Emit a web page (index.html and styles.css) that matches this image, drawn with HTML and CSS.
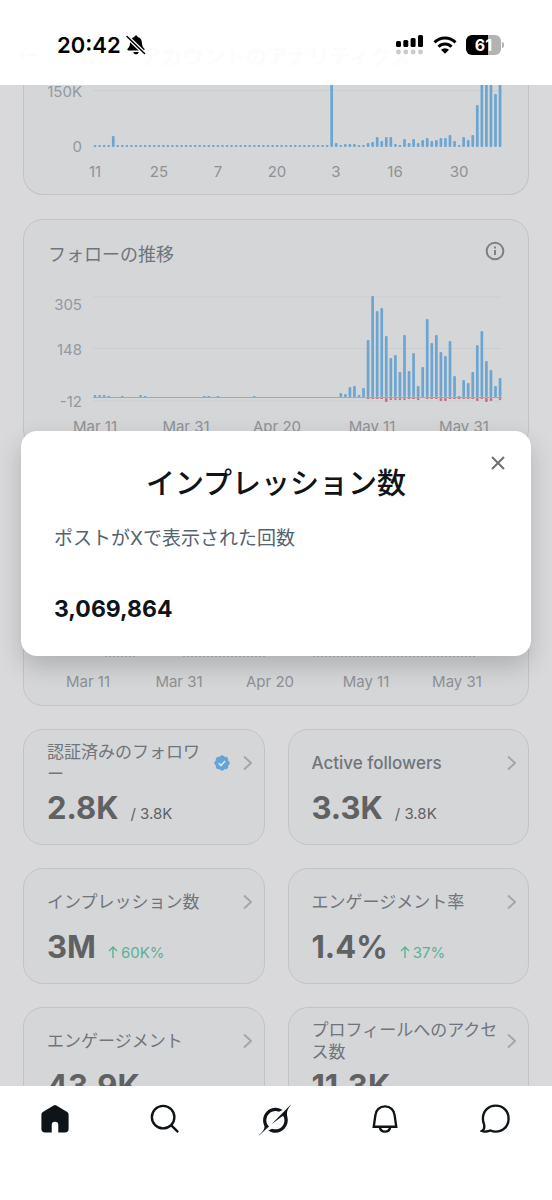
FILE: index.html
```html
<!DOCTYPE html>
<html lang="ja">
<head>
<meta charset="utf-8">
<meta name="viewport" content="width=device-width, initial-scale=1">
<title>アカウントのアナリティクス</title>
<link rel="stylesheet" href="styles.css">
</head>
<body>
<div class="app">
  <header class="topbar">
    <div class="status">
      <div class="status-left">
        <span class="clock">20:42</span>
        <svg class="bell-off" viewBox="0 0 20 20" aria-hidden="true">
          <path d="M10 .6c-.9 0-1.5.6-1.6 1.3C5.600 2.600 4.200 4.800 4.100 7.600c-.1 3.300-.9 4.500-2.300 6-.8.9-.4 2 .9 2h14.600c1.300 0 1.700-1.100.9-2-1.400-1.500-2.200-2.700-2.300-6-.1-2.800-1.500-5-4.300-5.700C11.500 1.200 10.900.6 10 .6z"/>
          <path d="M7.300 17h5.400c-.2 1.500-1.300 2.300-2.700 2.300S7.500 18.500 7.300 17z"/>
          <path d="M1 1.500 18.500 18.500" stroke="#fff" stroke-width="4"/>
          <path d="M1 1.500 18.500 18.500" stroke="#000" stroke-width="1.500" stroke-linecap="round"/>
        </svg>
      </div>
      <div class="status-right">
        <svg class="signal" viewBox="0 0 28 20" aria-hidden="true">
          <rect x="0" y="6" width="5" height="6" rx="1.500"/><rect x="7.300" y="5" width="5" height="7" rx="1.500"/><rect x="14.600" y="3" width="5" height="9" rx="1.500"/><rect x="22" y="0" width="5" height="12" rx="1.500"/>
          <g fill="#c9c9c9"><circle cx="2.500" cy="17" r="2.400"/><circle cx="9.800" cy="17" r="2.400"/><circle cx="17.100" cy="17" r="2.400"/><circle cx="24.500" cy="17" r="2.400"/></g>
        </svg>
        <svg class="wifi" viewBox="0 0 24 18" aria-hidden="true">
          <path d="M1.500 6.400a15 15 0 0 1 21 0M5.500 10.700a9.200 9.200 0 0 1 13 0" fill="none" stroke="#000" stroke-width="3"/>
          <path d="M12 17.800 8 13.800a5.700 5.700 0 0 1 8 0z"/>
        </svg>
        <span class="battery"><span class="battery-level">61</span></span>
      </div>
    </div>
    <div class="page-title">
      <svg class="back" viewBox="0 0 20 18" aria-hidden="true"><path d="M9 2 2 9l7 7M2 9h17"/></svg>
      <span>アカウントのアナリティクス</span>
    </div>
  </header>

  <main class="content">
    <section class="card card-cut">
      <svg class="chart" viewBox="-1 0 504 109" role="img" aria-label="日別の推移">
        <path class="grid" d="M68 5.500H477"/>
        <g class="bars" data-series="daily" data-base="62"></g>
        <g class="y-label"><text x="57" y="12">150K</text><text x="57" y="67">0</text></g>
        <g class="x-label"><text x="70" y="92">11</text><text x="134" y="92">25</text><text x="193" y="92">7</text><text x="252" y="92">20</text><text x="311" y="92">3</text><text x="370" y="92">16</text><text x="434" y="92">30</text></g>
      </svg>
    </section>

    <section class="card">
      <div class="card-head">
        <h2>フォローの推移</h2>
        <button class="info" type="button" aria-label="詳細">
          <svg viewBox="0 0 22 22" aria-hidden="true"><circle cx="11" cy="11" r="8.300"/><path d="M11 10v5M11 6.600v2"/></svg>
        </button>
      </div>
      <svg class="chart" viewBox="-1 0 504 179" role="img" aria-label="フォローの推移">
        <path class="grid" d="M68 27H477M68 78.500H477M68 131H477"/>
        <g class="bars" data-series="follows" data-base="127"></g>
        <g class="losses" data-series="unfollows" data-base="128"></g>
        <path class="zero" d="M68 127.500H477"/>
        <g class="y-label"><text x="57" y="40">305</text><text x="57" y="85">148</text><text x="57" y="137">-12</text></g>
        <g class="x-label"><text x="70" y="162">Mar 11</text><text x="161" y="162">Mar 31</text><text x="252" y="162">Apr 20</text><text x="347" y="162">May 11</text><text x="439" y="162">May 31</text></g>
      </svg>
    </section>

    <section class="card">
      <svg class="chart" viewBox="-1 0 504 230" role="img" aria-label="投稿の推移">
        <path class="floor" d="M80 181.500H112M158 181.500H240M288 181.500H450"/>
        <g class="x-label"><text x="63" y="212">Mar 11</text><text x="154" y="212">Mar 31</text><text x="245" y="212">Apr 20</text><text x="341" y="212">May 11</text><text x="432" y="212">May 31</text></g>
      </svg>
    </section>

    <div class="stats">
      <a class="card stat" href="#verified">
        <span class="stat-head"><span class="stat-label">認証済みのフォロワー</span>
          <svg class="verified" viewBox="0 0 22 22" aria-hidden="true"><path d="M20.396 11c-.018-.646-.215-1.275-.57-1.816-.354-.54-.852-.972-1.438-1.246.223-.607.270-1.264.140-1.897-.131-.634-.437-1.218-.882-1.687-.470-.445-1.053-.750-1.687-.882-.633-.130-1.290-.083-1.897.140-.273-.587-.704-1.086-1.245-1.440S11.647 1.620 11 1.604c-.646.017-1.273.213-1.813.568s-.969.854-1.240 1.440c-.608-.223-1.267-.272-1.902-.140-.635.130-1.220.436-1.690.882-.445.470-.749 1.055-.878 1.688-.130.633-.080 1.290.144 1.896-.587.274-1.087.705-1.443 1.245-.356.540-.555 1.170-.574 1.817.020.647.218 1.276.574 1.817.356.540.856.972 1.443 1.245-.224.606-.274 1.263-.144 1.896.130.634.433 1.218.877 1.688.470.443 1.054.747 1.687.878.633.132 1.290.084 1.897-.136.274.586.705 1.084 1.246 1.439.540.354 1.170.551 1.816.569.647-.016 1.276-.213 1.817-.567s.972-.854 1.245-1.440c.604.239 1.266.296 1.903.164.636-.132 1.220-.447 1.680-.907.460-.460.776-1.044.908-1.681s.075-1.299-.165-1.903c.586-.274 1.084-.705 1.439-1.246.354-.540.551-1.170.569-1.816z"/><path class="tick" d="m7 11.300 2.800 2.700 5-5.500"/></svg>
          <svg class="chevron" viewBox="0 0 9 16" aria-hidden="true"><path d="m1 1.500 7 6.500-7 6.500"/></svg></span>
        <span class="stat-row"><strong>2.8K</strong><span class="total">/ 3.8K</span></span>
      </a>
      <a class="card stat" href="#active">
        <span class="stat-head"><span class="stat-label" lang="en">Active followers</span>
          <svg class="chevron" viewBox="0 0 9 16" aria-hidden="true"><path d="m1 1.500 7 6.500-7 6.500"/></svg></span>
        <span class="stat-row"><strong>3.3K</strong><span class="total">/ 3.8K</span></span>
      </a>
      <a class="card stat" href="#impressions">
        <span class="stat-head"><span class="stat-label">インプレッション数</span>
          <svg class="chevron" viewBox="0 0 9 16" aria-hidden="true"><path d="m1 1.500 7 6.500-7 6.500"/></svg></span>
        <span class="stat-row"><strong>3M</strong><span class="change"><svg viewBox="0 0 10 12" aria-hidden="true"><path d="M5 12V1M1 5l4-4 4 4"/></svg>60K%</span></span>
      </a>
      <a class="card stat" href="#rate">
        <span class="stat-head"><span class="stat-label">エンゲージメント率</span>
          <svg class="chevron" viewBox="0 0 9 16" aria-hidden="true"><path d="m1 1.500 7 6.500-7 6.500"/></svg></span>
        <span class="stat-row"><strong>1.4%</strong><span class="change"><svg viewBox="0 0 10 12" aria-hidden="true"><path d="M5 12V1M1 5l4-4 4 4"/></svg>37%</span></span>
      </a>
      <a class="card stat" href="#engagement">
        <span class="stat-head"><span class="stat-label">エンゲージメント</span>
          <svg class="chevron" viewBox="0 0 9 16" aria-hidden="true"><path d="m1 1.500 7 6.500-7 6.500"/></svg></span>
        <span class="stat-row"><strong>43.9K</strong></span>
      </a>
      <a class="card stat" href="#visits">
        <span class="stat-head"><span class="stat-label">プロフィールへのアクセス数</span>
          <svg class="chevron" viewBox="0 0 9 16" aria-hidden="true"><path d="m1 1.500 7 6.500-7 6.500"/></svg></span>
        <span class="stat-row"><strong>11.3K</strong></span>
      </a>
    </div>
  </main>

  <nav class="tabs">
    <a href="#home" aria-label="ホーム"><svg viewBox="0 0 32 32" aria-hidden="true"><path class="solid" d="M14.500 1.600a2.600 2.600 0 0 1 3 0l11.500 7a3.200 3.200 0 0 1 1.500 2.700V26.500a4 4 0 0 1-4 4h-7V22.500a3.500 3.500 0 0 0-7 0V30.500h-7a4 4 0 0 1-4-4V11.300a3.200 3.200 0 0 1 1.500-2.700z"/></svg></a>
    <a href="#search" aria-label="検索"><svg viewBox="0 0 32 32" aria-hidden="true"><circle cx="14" cy="14" r="12"/><path d="m22.500 22.500 7.500 7.500"/></svg></a>
    <a href="#grok" aria-label="Grok"><svg class="grok" viewBox="0 0 33 32" aria-hidden="true"><path class="solid" d="m12.745 20.540 10.970-8.190c.539-.400 1.307-.244 1.564.380 1.349 3.288.746 7.241-1.938 9.955-2.683 2.714-6.417 3.310-9.830 1.954l-3.728 1.745c5.347 3.697 11.840 2.782 15.898-1.324 3.219-3.255 4.216-7.692 3.284-11.693l.008.009c-1.351-5.878.332-8.227 3.782-13.031L33 0l-4.540 4.590v-.014L12.743 20.544m-2.263 1.987c-3.837-3.707-3.175-9.446.100-12.755 2.420-2.449 6.388-3.448 9.852-1.979l3.720-1.737c-.670-.490-1.530-1.017-2.515-1.387-4.455-1.854-9.789-.931-13.410 2.728-3.483 3.523-4.579 8.940-2.697 13.561 1.405 3.454-.899 5.898-3.220 8.364C1.490 30.200.666 31.074 0 32l10.478-9.466"/></svg></a>
    <a href="#notifications" aria-label="通知"><svg viewBox="0 0 32 32" aria-hidden="true"><path d="M16 2.500c5.700 0 9.800 4 10.300 9.600L28 24.300H4l1.700-12.200C6.200 6.500 10.300 2.500 16 2.500zM10.300 24.300c.6 3.400 2.700 5.200 5.700 5.200s5.100-1.800 5.700-5.200"/></svg></a>
    <a href="#chat" aria-label="チャット"><svg viewBox="0 0 32 32" aria-hidden="true"><path d="M16.800 1.800c8 0 13.700 6 13.700 13.800S24.800 29.500 16.800 29.500c-2 0-3.800-.4-5.500-1.200-2.500.1-5.600 2.200-9.300.5 2.500-1.500 3.100-4 2.300-7.300-.8-1.800-1.200-3.700-1.200-5.900C3.100 7.800 8.800 1.800 16.800 1.800z"/></svg></a>
  </nav>

  <div class="dialog" role="dialog" aria-modal="true" aria-labelledby="dialog-title">
    <button class="close" type="button" aria-label="閉じる"><svg viewBox="0 0 14 14" aria-hidden="true"><path d="m1 1 12 12M13 1 1 13"/></svg></button>
    <h1 id="dialog-title">インプレッション数</h1>
    <p class="dialog-text">ポストがXで表示された回数</p>
    <p class="dialog-value">3,069,864</p>
  </div>
</div>
<script src="charts.js"></script>
</body>
</html>
```

FILE: styles.css
```css
* { box-sizing: border-box; }

body {
  margin: 0;
  background: #d9d9db;
  font-family: Inter, "Noto Sans CJK JP", sans-serif;
  color: #0f1419;
}

h1, h2, p { margin: 0; }
a { color: inherit; text-decoration: none; }
button { padding: 0; border: 0; background: none; cursor: pointer; }
svg { display: block; }

.app {
  position: relative;
  display: flex;
  flex-direction: column;
  height: 100vh;
  overflow: hidden;
}

/* Top bar */
.topbar {
  display: grid;
  flex: none;
  height: 85px;
  background: #fff;
}
.status, .page-title { grid-area: 1 / 1; }
.status {
  z-index: 1;
  display: flex;
  justify-content: space-between;
  padding: 30px 51px 0 57px;
}
.status-left, .status-right {
  display: flex;
  align-items: center;
  height: 30px;
}
.status-left { gap: 5px; }
.clock { font-size: 22px; font-weight: 600; color: #000; }
.bell-off { width: 20px; }
.status-right { gap: 9px; }
.signal { width: 28px; }
.wifi { width: 24px; }
.battery {
  position: relative;
  width: 35px;
  height: 20px;
  border-radius: 6px;
  background: linear-gradient(90deg, #000 62%, #b3b3b3 62%);
  color: #fff;
  font-size: 16px;
  font-weight: 700;
  line-height: 20px;
  text-align: center;
}
.battery::after {
  content: "";
  position: absolute;
  top: 7px;
  right: -3px;
  width: 2px;
  height: 6px;
  border-radius: 0 2px 2px 0;
  background: #b3b3b3;
}
.page-title {
  display: grid;
  grid-template-columns: 20px 1fr 20px;
  align-items: center;
  padding: 25px 18px 0;
  color: #fcfcfc;
  font-size: 21px;
  font-weight: 700;
  text-align: center;
}
.back { fill: none; stroke: currentColor; stroke-width: 2; }

/* Cards */
.content {
  display: flex;
  flex: 1;
  flex-direction: column;
  gap: 24px;
  min-height: 0;
  overflow: hidden;
  padding: 0 23px;
}
.card {
  flex: none;
  border: 1px solid #c1c4c7;
  border-radius: 20px;
  background: #d5d6d8;
}
.card-cut {
  border-top: 0;
  border-top-left-radius: 0;
  border-top-right-radius: 0;
}
.card-head {
  display: flex;
  align-items: flex-start;
  justify-content: space-between;
  padding: 20px 22px 0 24px;
}
.card-head h2 {
  color: #6f757b;
  font-size: 18px;
  font-weight: 400;
  line-height: 30px;
}
.info svg {
  width: 22px;
  fill: none;
  stroke: #7d8286;
  stroke-width: 2;
}

/* Charts */
.chart { width: 100%; }
.chart text { font-size: 15px; }
.grid { stroke: #cbced0; }
.zero { stroke: #9aabb8; }
.floor { stroke: #a9b6bc; stroke-dasharray: 2 2; }
.bars { fill: #6ca6d0; }
.losses { fill: #c9707a; }
.y-label { fill: #9399a0; text-anchor: end; }
.x-label { fill: #8e9295; text-anchor: middle; }

/* Stats */
.stats {
  display: grid;
  grid-template-columns: 1fr 1fr;
  gap: 23px;
  margin-top: -1px;
}
.stat {
  display: flex;
  flex-direction: column;
  min-height: 116px;
  padding: 10px 12px 0 23px;
}
.stat-head {
  display: flex;
  align-items: center;
  height: 46px;
}
.stat-label {
  flex: 1;
  color: #6f757b;
  font-size: 17px;
  line-height: 22px;
  line-break: anywhere;
}
.stat-label:lang(en) { font-weight: 500; }
.verified { width: 18px; margin: 0 12px 0 8px; fill: #65a5d6; }
.tick { fill: none; stroke: #dde3e8; stroke-width: 2; }
.chevron {
  width: 9px;
  fill: none;
  stroke: #a2a8ae;
  stroke-width: 2;
}
.stat-row {
  display: flex;
  align-items: baseline;
  gap: 12px;
  color: #5f6163;
  line-height: 44px;
}
.stat-row strong { font-size: 31px; font-weight: 700; }
.total, .change { font-size: 15px; }
.change {
  display: flex;
  align-items: baseline;
  gap: 3px;
  color: #5bb292;
}
.change svg {
  width: 10px;
  fill: none;
  stroke: currentColor;
  stroke-width: 1.4;
}

/* Tab bar */
.tabs {
  display: flex;
  flex: none;
  height: 114px;
  padding: 18px 2px 0 0;
  background: #fff;
}
.tabs a {
  display: flex;
  flex: 1;
  align-items: flex-start;
  justify-content: center;
}
.tabs svg {
  width: 30px;
  height: 30px;
  fill: none;
  stroke: #0f1419;
  stroke-width: 2.5;
}
.tabs .grok { width: 34px; height: 32px; }
.tabs .solid { fill: #0f1419; stroke: none; }

/* Dialog */
.dialog {
  position: absolute;
  top: 431px;
  right: 21px;
  left: 21px;
  padding: 33px 33px 29px;
  border-radius: 16px;
  background: #fff;
  box-shadow: 0 10px 24px rgba(0, 0, 0, 0.18);
}
.close {
  position: absolute;
  top: 25px;
  right: 26px;
}
.close svg {
  width: 14px;
  fill: none;
  stroke: #6b7075;
  stroke-width: 2;
}
.dialog h1 {
  font-size: 29px;
  font-weight: 500;
  line-height: 40px;
  text-align: center;
}
.dialog-text {
  margin-top: 20px;
  color: #536471;
  font-size: 19px;
  line-height: 30px;
}
.dialog-value {
  margin-top: 37px;
  font-size: 23px;
  font-weight: 700;
  line-height: 36px;
}
```

FILE: charts.js
```js
const zeros = (n, v) => Array(n).fill(v);

const series = {
  daily: [
    ...zeros(4, 2), 11, ...zeros(47, 2),
    63, 4, 2, 3, 3, 3, 2, 2, 4, 5, 10, 6, 10, 10, 3, 2, 8, 4, 8, 4, 7, 9, 6, 7, 9, 9, 12, 6, 2, 10, 7, 12, 42, 63, 63, 63, 53, 63,
  ],
  follows: [
    2, 2, 2, 1, 0, 0, 1, 0, 0, 0, 2, 1, ...zeros(12, 0), 1, 1, 0, 1, ...zeros(7, 0), 1, ...zeros(18, 0),
    4, 3, 10, 11, 2, 9, 57, 101, 86, 89, 61, 39, 42, 25, 62, 26, 44, 11, 30, 78, 54, 62, 45, 41, 56, 21, 1, 17, 14, 25, 52, 66, 36, 27, 11, 19,
  ],
  unfollows: [
    ...zeros(60, 0),
    1, 1, 1, 1, 4, 2, 2, 2, 2, 1, 1, 2, 0, 1, 1, 1, 3, 3, 1, 1, 1, 1, 1, 1, 3, 1, 4, 3, 0, 2,
  ],
};

document.querySelectorAll("[data-series]").forEach((group) => {
  const values = series[group.dataset.series];
  const base = Number(group.dataset.base);
  const down = group.dataset.series === "unfollows";
  const step = 405 / (values.length - 1);
  values.forEach((value, i) => {
    if (!value) return;
    const bar = document.createElementNS("http://www.w3.org/2000/svg", "rect");
    bar.setAttribute("x", 68.7 + i * step);
    bar.setAttribute("y", down ? base : base - value);
    bar.setAttribute("width", 2.7);
    bar.setAttribute("height", value);
    bar.setAttribute("rx", Math.min(1, value / 2));
    group.append(bar);
  });
});
```
